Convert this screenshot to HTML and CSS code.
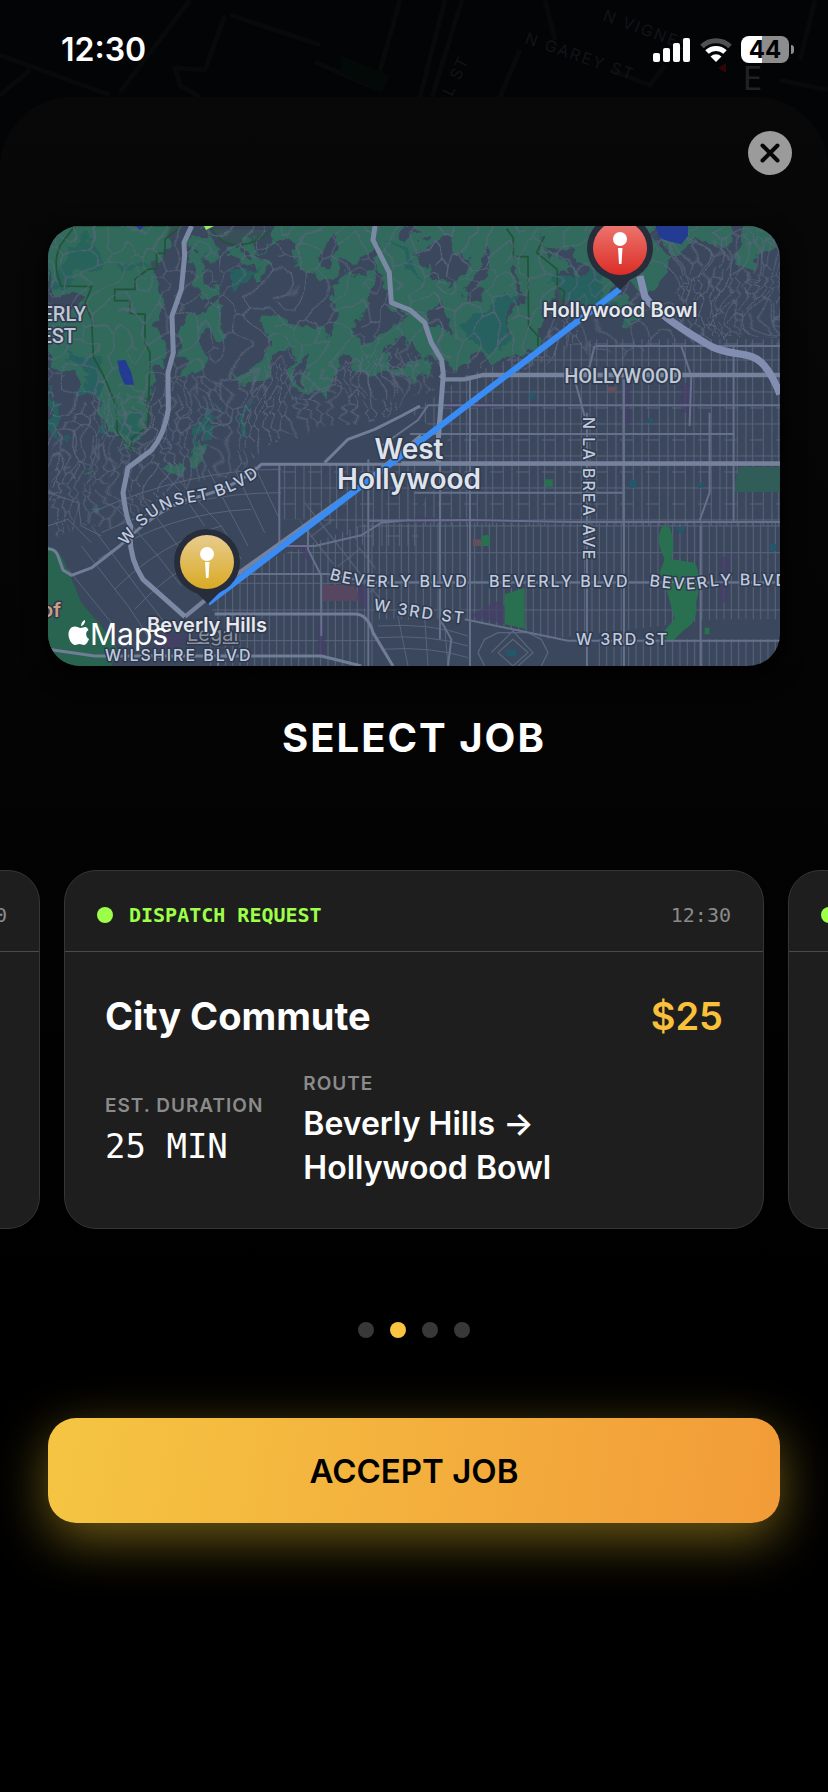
FILE: index.html
```html
<!DOCTYPE html>
<html lang="en">
<head>
    <meta charset="UTF-8">
    <meta name="viewport" content="width=device-width, initial-scale=1.0">
    <title>Select Job</title>
    <link rel="stylesheet" href="styles.css">
</head>

<body>

    <header class="status-bar">
      <svg class="backdrop" viewBox="0 0 828 160" preserveAspectRatio="xMidYMin slice" aria-hidden="true">
        <g fill="none" stroke="#07090b" stroke-width="5">
          <path d="M0 55L110 95M190 0L120 92M225 15L205 70L175 68L180 85L200 97M230 15L320 45M315 62L375 88L400 0M0 95L30 70M420 97L445 0M432 97L462 0M500 97L520 50M545 0L555 40M610 70L650 85L665 65M780 80L828 90M815 0L800 60"/>
        </g>
        <path d="M340 55l50 20-8 18-40-20z" fill="#020907"/>
        <path d="M718 68l8-5v10z" fill="#300509"/>
        <g class="backdrop-text">
          <text transform="translate(524 43) rotate(19)">N GAREY ST</text>
          <text transform="translate(602 20) rotate(20)">N VIGNES</text>
          <text transform="translate(452 97) rotate(-65)">L ST</text>
        </g>
        <text class="compass" x="743" y="90">E</text>
      </svg>
      <span class="time">12:30</span>
      <div class="status-icons">
        <svg width="38" height="24" viewBox="0 0 38 24" fill="#fff" aria-hidden="true">
          <rect x="0" y="15" width="7" height="9" rx="2"/>
          <rect x="10" y="10" width="7" height="14" rx="2"/>
          <rect x="20" y="5" width="7" height="19" rx="2"/>
          <rect x="30" y="0" width="7" height="24" rx="2"/>
        </svg>
        <svg width="32" height="24" viewBox="0 0 32 24" fill="none" stroke-width="5" aria-hidden="true">
          <path d="M2 8.500A20 20 0 0 1 30 8.500" stroke="#505050"/>
          <path d="M7 14A13 13 0 0 1 25 14" stroke="#fff"/>
          <path d="M16 24L10.500 18.500A8 8 0 0 1 21.500 18.500Z" fill="#fff"/>
        </svg>
        <div class="battery"><span>44</span></div>
      </div>
    </header>

    <main class="sheet">
      <button class="close" aria-label="Close">
        <svg width="20" height="20" viewBox="0 0 20 20" fill="none" stroke="#080808" stroke-width="4" stroke-linecap="round">
          <path d="M2.500 2.500L17.500 17.500M17.500 2.500L2.500 17.500"/>
        </svg>
      </button>

      <div class="map">
        <svg viewBox="0 0 732 440" preserveAspectRatio="xMidYMid slice" role="img" aria-label="Map of the route">
          <defs>
            <!-- residential streets on the hills -->
            <pattern id="hills" width="230" height="190" patternUnits="userSpaceOnUse">
              <path class="street" d="M0 30L20 45L28 75L60 90L75 60L95 52L110 20L140 0M60 90L55 130L80 150L120 140L135 100L160 92L172 60L205 50L230 30M120 140L150 165L140 190M0 120L22 130L30 165L10 190M80 150L75 190M95 52L125 70L135 100M160 92L190 110L200 145L230 120M200 145L185 190M20 0L35 20L60 25L75 0M172 60L160 25L185 0M28 75L0 90M30 165L55 170"/>
            </pattern>
            <pattern id="winding" width="110" height="130" patternUnits="userSpaceOnUse">
              <path class="street" d="M5 0L14 25L3 38L20 52L10 75L26 92L16 130M30 0L38 30L26 48L44 60L36 88L50 104L42 130M55 10L68 32L58 50L74 70L62 100L80 118M84 0L78 24L96 44L86 66L104 82L94 108L84 130M14 25L38 30M74 70L86 66M50 104L62 100"/>
            </pattern>
            <!-- flat city grid -->
            <pattern id="grid" width="78" height="96" patternUnits="userSpaceOnUse">
              <path class="street" d="M8 0V96M40 0V96M66 0V96M0 18H78M0 66H40"/>
            </pattern>
            <pattern id="grid-tall" width="66" height="172" patternUnits="userSpaceOnUse">
              <path class="street" d="M4 0V172M26 0V172M48 0V172M0 40H66M0 120H66"/>
            </pattern>
            <pattern id="grid-turned" width="46" height="120" patternUnits="userSpaceOnUse" patternTransform="rotate(-38)">
              <path class="street" d="M4 0V120M0 20H46"/>
            </pattern>
            <!-- breaks up the straight edges of woods and hill streets -->
            <filter id="rough" x="0" y="0" width="100%" height="100%">
              <feTurbulence type="fractalNoise" baseFrequency=".012" numOctaves="4" seed="7"/>
              <feDisplacementMap in="SourceGraphic" scale="110" xChannelSelector="R" yChannelSelector="G"/>
            </filter>
            <filter id="bend" x="0" y="0" width="100%" height="100%">
              <feTurbulence type="fractalNoise" baseFrequency=".006" numOctaves="2" seed="3"/>
              <feDisplacementMap in="SourceGraphic" scale="130" xChannelSelector="R" yChannelSelector="G"/>
            </filter>
            <linearGradient id="gold" x1="0" y1="0" x2="0" y2="1">
              <stop offset="0" stop-color="#e8cc8e"/>
              <stop offset="1" stop-color="#d9aa24"/>
            </linearGradient>
            <linearGradient id="red" x1="0" y1="0" x2="0" y2="1">
              <stop offset="0" stop-color="#ee7a74"/>
              <stop offset="1" stop-color="#db2d26"/>
            </linearGradient>
            <path id="sunset" d="M78 320C97 296 112 281 140 277S186 268 222 242"/>
            <path id="beverly-w" d="M281 353C300 359 318 361 340 361H480"/>
            <path id="beverly-e" d="M601 360C620 362 640 366 660 361C680 358 700 360 780 360"/>
            <path id="third-w" d="M325 384C350 388 380 395 460 402"/>
          </defs>

          <rect width="732" height="440" fill="#3b475c"/>

          <!-- terrain is drawn at three units per pixel -->
          <g transform="scale(.3333)">
            <g filter="url(#rough)">
              <path fill="none" d="M-60 -60H2260V1380H-60Z"/>
              <g class="wood">
                <path d="M-60 -60H420L350 50L340 90L320 140L350 250L330 400L340 470L310 510L250 680L180 600L130 480L90 500L20 420L-60 200Z"/>
                <path d="M420 60L470 30L520 60L500 110L455 100L470 150L500 190L470 200L430 130Z"/>
                <path d="M540 60L620 90L600 50L680 60L720 -60H1010L1000 60L930 110L900 145L850 150L800 170L730 60L640 50L650 120L660 170L630 150L620 100L550 120Z"/>
                <path d="M390 300L430 260L510 220L530 250L510 330L480 350L470 430L440 470L410 440L420 410L380 370L400 340Z"/>
                <path d="M840 320L880 170L990 140L960 250L900 330L1050 310L1110 280L1180 330L1140 470L1040 440L980 450L890 410L840 370Z"/>
                <path d="M660 330L680 260L720 290L800 320L900 350L930 400L860 400L830 550L810 500L770 500L740 470L730 370L660 420L640 460L580 480L540 430L600 450L650 380Z"/>
                <path d="M1000 -60H1450L1500 90L1540 110L1530 180L1480 250L1470 350L1430 380L1380 370L1330 420L1290 400L1210 420L1150 360L1080 300L1020 210L990 130Z"/>
                <path d="M1440 -60H2060L2020 60L1990 40L1900 60L1870 110L1830 180L1780 190L1720 150L1700 200L1770 250L1800 290L1740 300L1640 190L1560 150L1500 70Z"/>
                <path d="M2060 40L2130 -60H2260V110L2140 60L2120 140L2060 130Z"/>
                <path d="M350 700L380 690L410 730L390 740ZM430 670Q500 630 490 690Q460 740 425 710ZM100 870L125 860L120 885ZM100 740L140 745L120 760Z"/>
              </g>
              <!-- ridges without trees -->
              <path fill="#3b475c" d="M580 230L700 200L730 250L640 280L590 360L550 300ZM1110 60L1190 30L1250 100L1230 190L1180 170ZM1290 90L1330 70L1310 200L1260 230ZM1490 40L1570 80L1620 130L1550 120ZM850 40L890 90L860 130L800 80ZM1000 370L1100 340L1150 400L1040 420ZM1790 0H1850L1900 80L1850 60ZM0 120L40 200L90 200L60 300L0 250ZM1160 220L1210 250L1190 330L1150 290ZM1390 160L1410 140L1400 300L1370 330ZM1050 20L1090 0L1120 40L1070 60ZM760 380L790 390L770 470L750 440ZM1000 150L1030 220L1000 260Z"/>
              <g class="shade">
                <path d="M50 60L110 40L150 60L140 140L80 150L40 180ZM200 120L300 110L330 130L250 140ZM70 360L140 390L170 460L150 520L80 500L120 470ZM230 560L270 590L265 640L230 640ZM530 150L600 120L640 110L570 190ZM500 510L490 640L440 670L480 590ZM560 590L620 510L600 560L570 620ZM160 550L190 640L230 680L160 620ZM0 450L60 640L0 600Z"/>
                <path d="M1240 280L1390 200L1390 340L1310 390L1270 360ZM1500 170L1620 120L1700 230L1680 260L1610 240ZM1000 40L1080 80L1140 180L1060 100Z"/>
              </g>
            </g>
            <path fill="#28644f" d="M0 960Q40 980 50 1010L100 1130L160 1200L210 1270L190 1320H0Z"/>
            <path class="park" d="M38 57Q10 110 40 180L131 182L111 232L131 282L136 392L165 445L205 540L208 620L250 670V637L300 602L306 380L291 350V265L246 262V224H200V190H261V160L300 130L326 127V82H351V40L400 0H80Z"/>
            <path class="park" d="M492 10Q520 60 580 56Q640 50 665 12M1376 8L1396 35V92H1440L1442 300L1470 330V360M1490 30L1466 80L1528 130V182L1550 196L1540 260"/>

            <!-- local streets -->
            <g filter="url(#bend)">
              <path fill="url(#hills)" d="M-60 -60H1230L1180 330L1100 500L640 560L0 820H-60Z"/>
              <path fill="url(#hills)" d="M1100 -60H2260V330L1900 350L1300 420L1170 400Z"/>
              <path fill="url(#winding)" d="M0 700L130 500L380 470L700 430L1160 380V500L900 620L620 670L240 880L0 960Z"/>
              <path fill="url(#winding)" d="M1850 60L2260 40V330L1890 330ZM1400 380L1600 270L1620 380Z"/>
            </g>
            <path fill="url(#grid)" d="M1250 450L1440 380L1640 340H2196V900H1100L1200 640L1090 560Z"/>
            <path fill="url(#grid)" d="M700 715H1110V960H950L820 880H690Z"/>
            <path fill="url(#grid-tall)" d="M500 1060L960 890H2196V1180H2000L1500 1240L1270 1180H980L990 1320H480Z"/>
            <path fill="url(#grid-tall)" d="M1640 1240H2196V1320H1640Z"/>
            <g class="street">
              <path d="M130 860Q420 730 700 730M160 920Q420 800 700 800M150 1000Q360 860 610 850M200 1090Q340 950 520 900M260 1150Q400 1000 560 960M330 720L400 800L470 900M390 760L520 900L580 1000M480 730L600 960M560 730L650 920M620 720L690 870M270 800L390 960M210 850L330 990L400 1080M130 900L280 1100L350 1190M100 960L240 1140L300 1230M60 1030L190 1190"/>
              <path d="M0 800L90 830L100 900L160 930M0 900L60 880L130 950"/>
              <path d="M990 1200Q1150 1190 1260 1230M990 1235Q1150 1225 1260 1260M1000 1270Q1150 1260 1260 1295M1050 1170L1080 1320M1130 1170L1140 1320M1190 1200L1200 1320"/>
            </g>
            <path fill="url(#grid-turned)" d="M740 860L800 800L870 900L980 1010L1000 1150L940 1060L830 1000Z"/>
            <path fill="none" stroke="#59657a" stroke-width="4" d="M1290 1280L1310 1240L1350 1220H1440L1480 1240L1500 1280L1480 1320M1290 1280L1310 1320M1330 1280L1395 1215L1455 1280L1410 1320M1350 1280L1395 1240L1440 1280L1395 1320L1350 1280"/>

            <!-- water, parks and places -->
            <path fill="#233b92" d="M208 404L232 402L250 440L258 476H230L215 440ZM1822 0H1920L1920 30L1900 55L1860 45L1835 35ZM265 0H290L275 12Z"/>
            <g fill="#28704f">
              <path d="M1835 920Q1845 885 1865 905Q1885 950 1870 1000L1940 1010Q1965 1050 1945 1130Q1950 1190 1910 1210L1870 1250L1840 1225L1880 1180L1850 1070L1835 1040L1850 1000Q1825 950 1835 920Z"/>
              <path d="M1370 1105L1430 1085V1200L1440 1210L1370 1195ZM1300 930L1325 925V960H1300ZM1490 760H1515V782H1490ZM1970 1205H1985V1225H1970Z"/>
            </g>
            <path fill="#305d57" d="M2075 722H2196V798H2060V770Z"/>
            <path fill="#25576a" d="M1745 762H1765V785H1745ZM1950 770H1966V785H1950ZM1880 905L1915 900L1900 925ZM2165 955H2185V975H2165ZM1445 500H1460V520H1445ZM1800 578H1815V592H1800ZM1375 1270H1405V1290H1375Z"/>
            <path fill="#574660" d="M825 1075L920 1080L940 1125H825Z"/>
            <path fill="#634e5d" d="M1680 482H1705V500H1680ZM1275 940H1300V960H1275Z"/>
            <path fill="#463f6a" opacity=".7" d="M1265 1170L1345 1125L1370 1140V1195ZM1725 480H1745V600H1725ZM1900 470H1935V560H1900ZM1000 882L1100 880V892H1000ZM700 955H790L780 1010L760 970L700 965ZM1100 872L1600 885V893L1100 885ZM2020 990L2045 1000L2035 1130H2015ZM340 1220L440 1230L380 1265H320ZM810 1190H830V1290H810ZM930 1060L960 1090V1160L930 1120ZM1190 530H1340V545H1190Z"/>

            <!-- main streets -->
            <g fill="none" stroke="#65718a" stroke-width="6">
              <path d="M1000 660L1110 582L1140 538H2196M1642 360H2196M1086 624H2060M1100 800H1730M960 884L1270 882L1580 888H2196M690 960H800L940 928L1000 890L1086 882"/>
              <path d="M1266 456V1320M961 700V1320M694 715V960M1176 660V1240M1617 560V1320M1728 460V1320M1958 900V1320M2057 360V884M1610 570L1580 460M1640 360L1625 420L1600 460M780 900V970L820 1050V1230M1955 884L1985 800V560M1900 360L1930 450L1925 600"/>
              <path d="M560 1044H840L960 1069H2196M1250 1180L1560 1244H2196M510 1230V1320M1176 1180L1210 1240L1200 1320"/>
            </g>
            <g fill="none" stroke="#717d96" stroke-width="9" stroke-linejoin="round">
              <path d="M0 968Q25 970 30 990L45 1032L70 1048L130 1026L215 960Q330 850 420 820Q560 790 640 715H2196"/>
              <path d="M830 710L900 640L980 610L1060 570L1116 540M500 1164H920Q960 1164 975 1220L1035 1320"/>
              <path d="M0 1270L140 1290H820L940 1320"/>
            </g>
            <path fill="none" stroke="#76829b" stroke-width="13" d="M1060 712H2196M411 1172L560 1050L940 778L1120 630M1176 447L1192 460L1250 460L1306 447H2196"/>
            <path fill="none" stroke="#7c89a5" stroke-width="15" stroke-linejoin="round" d="M431 0L408 50L410 90L400 190L372 270L376 380L360 440L361 550Q350 625 310 673L240 725L225 800Q235 880 248 900Q238 990 285 1060L411 1172M981 0L975 42L1024 140L1030 230L1086 252L1130 290L1150 350L1181 402L1186 445L1171 640V710"/>
            <path fill="none" stroke="#818eb2" stroke-width="22" d="M1776 150L1791 212Q1830 270 1991 362C2060 395 2110 370 2150 420Q2175 450 2196 505"/>
          </g>

          <path d="M156 0h10l-8 4z" fill="#8df25c"/>

          <!-- route -->
          <path d="M160 377L572 63" stroke="#3a8cf5" stroke-width="6"/>

          <g class="road-label">
            <text><textPath href="#sunset">W SUNSET BLVD</textPath></text>
            <text><textPath href="#beverly-w">BEVERLY BLVD</textPath></text>
            <text x="441" y="361">BEVERLY BLVD</text>
            <text><textPath href="#beverly-e">BEVERLY BLVD</textPath></text>
            <text><textPath href="#third-w">W 3RD ST</textPath></text>
            <text x="528" y="419">W 3RD ST</text>
            <text x="57" y="435">WILSHIRE BLVD</text>
            <text transform="translate(535 191) rotate(90)">N LA BREA AVE</text>
          </g>
          <g class="area-label">
            <text x="575" y="157" text-anchor="middle">HOLLYWOOD</text>
            <text x="38" y="95" text-anchor="end">ERLY</text>
            <text x="28" y="117" text-anchor="end">EST</text>
          </g>
          <g class="city-label">
            <text x="361" y="233">West</text>
            <text x="361" y="263">Hollywood</text>
          </g>
          <text class="place-label" x="-7" y="391">of</text>

          <!-- pins -->
          <g>
            <path d="M146 364L160 378L174 364Z" fill="#272d3b"/>
            <circle cx="159" cy="336" r="33" fill="#272d3b"/>
            <circle cx="159" cy="336" r="27" fill="url(#gold)"/>
            <circle cx="159" cy="328" r="7" fill="#fff"/>
            <path d="M157 336h4.500l-1 16h-2.500z" fill="#fff"/>
          </g>
          <g>
            <path d="M558 50L572 64L586 50Z" fill="#272d3b"/>
            <circle cx="572" cy="22" r="33" fill="#272d3b"/>
            <circle cx="572" cy="22" r="27" fill="url(#red)"/>
            <circle cx="572" cy="13" r="7" fill="#fff"/>
            <path d="M570 22h4.500l-1 16h-2.500z" fill="#fff"/>
          </g>

          <text class="legal" x="139" y="415">Legal</text>
          <g class="pin-label">
            <text x="159" y="406">Beverly Hills</text>
            <text x="572" y="91">Hollywood Bowl</text>
          </g>
          <path fill="#fff" transform="translate(20 394)" d="M13 6C13 3 15 .5 17 0C17.300 3 15.500 5.500 13 6ZM17.500 7C15.500 7 14.500 8 12.500 8C11 8 9.500 6.500 7 6.500C3 6.500 .500 10 .500 14.500C.500 19.500 4 25 7 25C9 25 9.500 24 11.500 24C13.500 24 14 25 16 25C18.500 25 20.500 20.500 21 19C18 17.500 16.800 12 20.500 10C19.500 8 18.500 7 17.500 7Z"/>
          <text class="maps-logo" x="42" y="419">Maps</text>
        </svg>
      </div>

      <h1>SELECT JOB</h1>

      <div class="carousel">
        <article class="card">
          <div class="card-header">
            <span class="request">DISPATCH REQUEST</span>
            <span class="clock">12:30</span>
          </div>
        </article>

        <article class="card">
          <div class="card-header">
            <span class="request">DISPATCH REQUEST</span>
            <span class="clock">12:30</span>
          </div>
          <div class="card-body">
            <div class="job">
              <h2>City Commute</h2>
              <span class="price">$25</span>
            </div>
            <dl class="details">
              <div>
                <dt>EST. DURATION</dt>
                <dd class="mono">25 MIN</dd>
              </div>
              <div>
                <dt>ROUTE</dt>
                <dd>Beverly Hills →<br>Hollywood Bowl</dd>
              </div>
            </dl>
          </div>
        </article>

        <article class="card">
          <div class="card-header">
            <span class="request">DISPATCH REQUEST</span>
            <span class="clock">12:30</span>
          </div>
        </article>
      </div>

      <div class="dots">
        <button aria-label="Job 1"></button>
        <button aria-label="Job 2" class="active" aria-current="true"></button>
        <button aria-label="Job 3"></button>
        <button aria-label="Job 4"></button>
      </div>

      <button class="accept">ACCEPT JOB</button>
    </main>

</body>
</html>
```
FILE: styles.css
```css
    * {
        box-sizing: border-box;
    }

    body {
        margin: 0;
        min-height: 100vh;
        display: flex;
        flex-direction: column;
        background: #020406;
        color: #fff;
        font-family: Inter, "Liberation Sans", sans-serif;
        overflow-x: hidden;
    }

    h1, h2, dl, dd {
        margin: 0;
    }

    button {
        border: 0;
        padding: 0;
        font: inherit;
        cursor: pointer;
    }

    /* STATUS BAR */
    .status-bar {
        position: relative;
        height: 97px;
        padding: 2px 34px 0 61px;
        display: flex;
        justify-content: space-between;
        align-items: center;
    }

    .backdrop {
        position: absolute;
        top: 0;
        left: 0;
        width: 100%;
        height: 160px;
    }

    .backdrop-text {
        fill: #121416;
        font-size: 16px;
        letter-spacing: 2px;
    }

    .compass {
        fill: #222;
        font-size: 32px;
    }

    .time {
        position: relative;
        font-size: 32px;
        font-weight: 600;
    }

    .status-icons {
        position: relative;
        display: flex;
        align-items: center;
        gap: 9px;
    }

    .battery {
        position: relative;
        width: 48px;
        height: 27px;
        margin-right: 5px;
        border-radius: 8px;
        background: linear-gradient(90deg, #fff 44%, #8d8d8d 44%);
        color: #000;
        font-size: 24px;
        font-weight: 700;
        line-height: 27px;
        text-align: center;
    }

    .battery::after {
        content: "";
        position: absolute;
        right: -5px;
        top: 9px;
        width: 3px;
        height: 9px;
        border-radius: 0 4px 4px 0;
        background: #8d8d8d;
    }

    /* SHEET */
    .sheet {
        position: relative;
        flex: 1;
        display: flex;
        flex-direction: column;
        padding: 34px 48px 48px;
        border-radius: 72px 72px 0 0;
        background: linear-gradient(#080808, #000 70%);
    }

    .close {
        width: 44px;
        height: 44px;
        margin-right: -12px;
        align-self: flex-end;
        display: flex;
        align-items: center;
        justify-content: center;
        border-radius: 50%;
        background: #9b9b9b;
    }

    /* MAP */
    .map {
        margin-top: 51px;
        aspect-ratio: 732 / 440;
        border-radius: 32px;
        overflow: hidden;
        box-shadow: 0 8px 24px #000;
    }

    .map svg {
        display: block;
        width: 100%;
        height: 100%;
    }

    .street {
        fill: none;
        stroke: #59647a;
        stroke-width: 3px;
    }

    .wood {
        fill: #316a5d;
    }

    .shade {
        fill: #27605f;
    }

    .park {
        fill: #2f6e5244;
        stroke: #205338;
        stroke-width: 5px;
    }

    .map text {
        paint-order: stroke;
        stroke: #2f3a50;
        stroke-width: 3px;
        stroke-linejoin: round;
    }

    .road-label {
        fill: #c0cadd;
        font-size: 16px;
        font-weight: 500;
        letter-spacing: 2px;
    }

    .area-label {
        fill: #bfc7d2;
        font-family: Roboto, sans-serif;
        font-size: 20px;
        font-weight: 500;
    }

    .city-label {
        fill: #dfe4ec;
        font-size: 28px;
        font-weight: 600;
        text-anchor: middle;
    }

    .place-label {
        fill: #c9a083;
        font-size: 20px;
        font-weight: 600;
    }

    .pin-label {
        fill: #e6e8ec;
        font-size: 20px;
        font-weight: 600;
        text-anchor: middle;
    }

    .legal {
        fill: #8b909c;
        font-size: 20px;
        text-decoration: underline;
    }

    .map .maps-logo {
        fill: #fff;
        stroke: none;
        font-size: 30px;
    }

    h1 {
        margin-top: 48px;
        font-size: 40px;
        font-weight: 700;
        line-height: 48px;
        letter-spacing: 2px;
        text-align: center;
    }

    /* JOB CARDS */
    .carousel {
        margin: 108px -48px 0;
        display: flex;
        justify-content: center;
        gap: 24px;
        overflow: hidden;
    }

    .card {
        flex: 0 0 calc(100% - 128px);
        border: 1px solid #353535;
        border-radius: 32px;
        background: #1e1e1e;
    }

    .card-header {
        display: flex;
        justify-content: space-between;
        align-items: center;
        height: 81px;
        padding: 8px 32px 0;
        border-bottom: 1px solid #4a4a4a;
        font-family: "DejaVu Sans Mono", monospace;
        font-size: 20px;
    }

    .request {
        display: flex;
        align-items: center;
        gap: 16px;
        color: #9dff4a;
        font-weight: 700;
    }

    .request::before {
        content: "";
        width: 16px;
        height: 16px;
        border-radius: 50%;
        background: #9dff4a;
    }

    .clock {
        color: #8a8a8a;
    }

    .card-body {
        padding: 40px 40px 38px;
    }

    .job {
        display: flex;
        justify-content: space-between;
        font-size: 38px;
        font-weight: 600;
        line-height: 48px;
    }

    h2 {
        font-size: 38px;
        font-weight: 700;
    }

    .price {
        color: #f9c13a;
    }

    .details {
        margin-top: 32px;
        display: flex;
        align-items: center;
        gap: 40px;
    }

    dt {
        margin-bottom: 6px;
        color: #8b8b8b;
        font-size: 19px;
        font-weight: 600;
        line-height: 24px;
        letter-spacing: 1px;
    }

    dd {
        font-size: 32px;
        font-weight: 600;
        line-height: 44px;
    }

    .mono {
        font-family: "DejaVu Sans Mono", monospace;
        font-size: 34px;
        font-weight: 400;
    }

    .dots {
        margin-top: 93px;
        display: flex;
        justify-content: center;
        gap: 16px;
    }

    .dots button {
        width: 16px;
        height: 16px;
        border-radius: 50%;
        background: #383838;
    }

    .dots .active {
        background: #f9c440;
    }

    .accept {
        margin-top: 80px;
        height: 105px;
        border-radius: 28px;
        background: linear-gradient(100deg, #f5c542, #f29b38);
        box-shadow: 0 16px 52px #d9b42a80;
        color: #000;
        font-size: 33px;
        font-weight: 600;
    }
```
